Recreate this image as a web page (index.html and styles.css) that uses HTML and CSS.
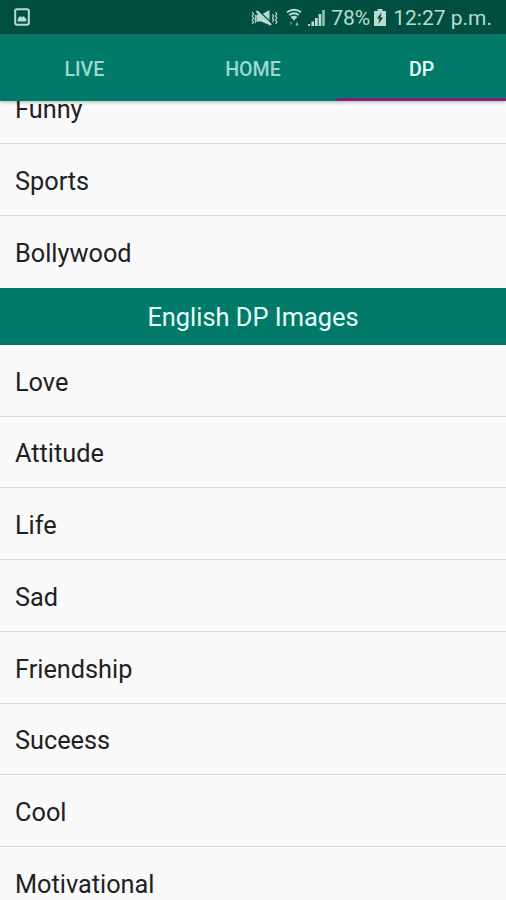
FILE: index.html
```html
<!DOCTYPE html>
<html lang="en">
<head>
<meta charset="utf-8">
<meta name="viewport" content="width=device-width, initial-scale=1">
<title>DP Images</title>
<link rel="stylesheet" href="styles.css">
</head>
<body>
<div class="screen">
  <header class="status">
    <svg class="photo" width="16" height="18" viewBox="0 0 16 18"><rect x="1.2" y="1.2" width="13.6" height="15.6" rx="1.8" fill="none" stroke="currentColor" stroke-width="2"/><path d="M3.7 13.5v-2.7l2.4-2.8 1.7 1.3 1.8-1.1 2.7 2.8v2.5z" fill="currentColor"/></svg>
    <div class="indicators">
      <svg class="mute" width="27" height="18" viewBox="0 0 27 18"><path d="M5.5 5.5h5L18.5 1v15L10 12.5H5.5z" fill="currentColor"/><path d="M8.5 2.5 20 13.5" stroke="#004f40" stroke-width="1.4"/><path d="M5.5 2 20 16" stroke="currentColor" stroke-width="2.4"/><path d="M1.2 3l1.3 2-1.3 2 1.3 2-1.3 2 1.3 2-1.3 2M4 6L5 8 4 10l1 2-1 2M24.5 3l1.3 2-1.3 2 1.3 2-1.3 2 1.3 2-1.3 2M21.5 5l1 2-1 2 1 2-1 2" fill="none" stroke="currentColor" stroke-width="1.2"/></svg>
      <svg class="wifi" width="16" height="19" viewBox="0 0 16 19"><path d="M1 4.2Q8-.8 15 4.2M3.2 7Q8 3.4 12.8 7M5.2 9.7Q8 7.7 10.8 9.7" fill="none" stroke="currentColor" stroke-width="2"/><path d="M5.8 10h4.4L8 12.8z" fill="currentColor"/><path d="M3.5 14h3l-1.5 3.8z" fill="currentColor" opacity=".4"/><path d="M9.5 17.5h3L11 13.6z" fill="currentColor" opacity=".8"/></svg>
      <svg class="signal" width="17" height="18" viewBox="0 0 17 18"><path d="M0 15h2v2H0zM3.4 12.5h2.7V17H3.4zM7 9h2.7v8H7zM10.6 5h2.7v12h-2.7z" fill="currentColor"/><path d="M14.2 1h2.6v16h-2.6z" fill="currentColor" opacity=".8"/></svg>
      <span class="percent">78%</span>
      <svg class="battery" width="12" height="17" viewBox="0 0 12 17"><path d="M3.5 0h5v2H12v15H0V2h3.5z" fill="currentColor"/><path d="M7.6 3.5 3 9.5h2.6L4.4 15 9 8.4H6.4z" fill="#003d32"/></svg>
      <span class="time">12:27 p.m.</span>
    </div>
  </header>
  <nav class="tabs">
    <a class="tab">LIVE</a>
    <a class="tab">HOME</a>
    <a class="tab active">DP</a>
  </nav>
  <main class="content">
    <div class="list">
      <div class="row">Funny</div>
      <div class="row">Sports</div>
      <div class="row last">Bollywood</div>
      <h2 class="heading">English DP Images</h2>
      <div class="row">Love</div>
      <div class="row">Attitude</div>
      <div class="row">Life</div>
      <div class="row">Sad</div>
      <div class="row">Friendship</div>
      <div class="row">Suceess</div>
      <div class="row">Cool</div>
      <div class="row">Motivational</div>
    </div>
  </main>
</div>
</body>
</html>
```
FILE: styles.css
```css
* { box-sizing: border-box; }
body { margin: 0; font-family: Roboto, sans-serif; background: #fafafa; }
.screen { display: flex; flex-direction: column; height: 900px; overflow: hidden; }

.status {
  display: flex;
  flex: none;
  align-items: center;
  justify-content: space-between;
  height: 34px;
  padding: 0 14px;
  background: #004f40;
  color: #b9dcd2;
  font-size: 21px;
}
.indicators { display: flex; align-items: center; height: 34px; padding-top: 1px; }
.wifi { margin-left: 8px; }
.signal { margin-left: 6px; }
.percent { margin-left: 6px; }
.battery { margin-left: 4px; }
.time { margin-left: 7px; }

.tabs {
  display: grid;
  grid-template-columns: repeat(3, 1fr);
  flex: none;
  height: 67px;
  background: #027a6a;
  box-shadow: 0 1px 4px rgba(0, 0, 0, .3);
  z-index: 1;
}
.tab {
  display: flex;
  align-items: center;
  justify-content: center;
  padding-top: 6px;
  border-bottom: 3px solid transparent;
  color: #9bd9cc;
  font-size: 19.6px;
  font-weight: 500;
}
.active { color: #e8fffa; border-bottom-color: #831f82; }

.content { flex: 1; min-height: 0; overflow: hidden; }
.list { margin-top: -28.4px; }
.row {
  display: flex;
  align-items: center;
  height: 71.75px;
  padding: 3px 15px 0;
  border-bottom: 1px solid #dadada;
  color: #202122;
  font-size: 25.3px;
}
.last { height: 71.9px; border-bottom-color: transparent; }
.heading {
  display: flex;
  align-items: center;
  justify-content: center;
  height: 56.8px;
  margin: 0;
  padding-top: 2px;
  background: #027a6a;
  color: #e8fffa;
  font-size: 25.4px;
  font-weight: 400;
}
.heading ~ .row { padding-top: 4px; }
```
